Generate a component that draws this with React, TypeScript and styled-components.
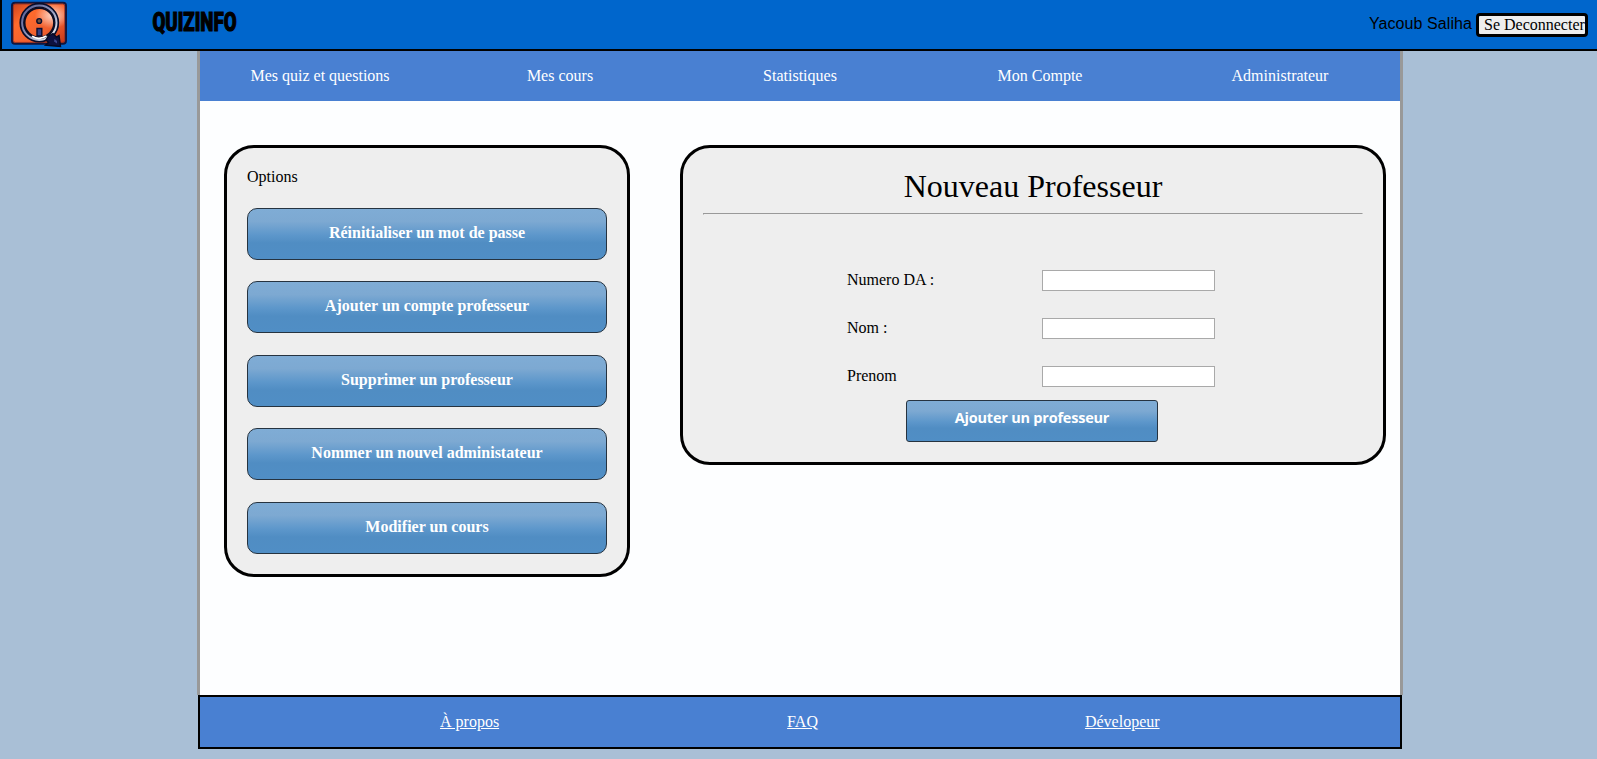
import React from 'react';
import styled, { createGlobalStyle } from 'styled-components';

const GlobalStyle = createGlobalStyle`
  * { box-sizing: border-box; }
  body {
    margin: 0;
    background: #a9bfd6;
    color: #000;
    font: 16px/18px 'Liberation Serif', 'Times New Roman', serif;
  }
`;

const Header = styled.header`
  display: flex;
  align-items: flex-start;
  height: 51px;
  padding-left: 8px;
  padding-right: 9px;
  background: #06c;
  border-left: 2px solid #000;
  border-bottom: 2px solid #000;
`;

const Logo = styled.svg`
  width: 60px;
  height: 49px;
`;

const Brand = styled.svg`
  width: 180px;
  height: 44px;
  margin-left: 80px;
  overflow: visible;
  font-family: Roboto, sans-serif;
  font-size: 26px;
  font-weight: 900;
`;

const Session = styled.div`
  display: flex;
  align-items: center;
  gap: 4px;
  margin: 13px 0 0 auto;
`;

const UserName = styled.span`
  font-family: 'Liberation Sans', Arial, sans-serif;
  font-size: 16px;
  letter-spacing: 0.08px;
  line-height: 20px;
  padding-bottom: 3px;
`;

const Logout = styled.button`
  width: 112px;
  height: 24px;
  padding: 0 0 0 5px;
  overflow: hidden;
  white-space: nowrap;
  text-align: left;
  font: inherit;
  color: #000;
  background: #eee;
  border: 3px solid #000;
  border-radius: 4px;
`;

const Page = styled.div`
  width: 1206px;
  height: 644px;
  margin-left: 197px;
  background: #fdfeff;
  border: solid #999;
  border-width: 0 3px;
`;

const Nav = styled.nav`
  display: grid;
  grid-template-columns: repeat(5, 1fr);
  align-items: center;
  height: 50px;
  background: #4980d2;
  color: #fff;
  text-align: center;
`;

const Content = styled.main`
  display: flex;
  align-items: flex-start;
  gap: 50px;
  padding: 44px 14px 0 24px;
`;

const Panel = styled.section<{ $width: number; $height: number }>`
  width: ${(p) => p.$width}px;
  height: ${(p) => p.$height}px;
  padding: 20px;
  background: #eee;
  border: 3px solid #000;
  border-radius: 30px;
`;

const OptionList = styled.div`
  display: flex;
  flex-direction: column;
  gap: 21.4px;
  margin-top: 22px;
`;

const BlueButton = styled.button`
  display: block;
  padding: 0;
  color: #fff;
  font-weight: bold;
  border: 1px solid #263340;
  background: linear-gradient(#7facd5 0%, #7da9d2 25%, #5d97cb 52%, #508dc3 68%, #508ec5 100%);
`;

const OptionButton = styled(BlueButton)`
  width: 360px;
  height: 52px;
  padding-bottom: 2px;
  font-family: inherit;
  font-size: 16px;
  border-radius: 10px;
`;

const SubmitButton = styled(BlueButton)`
  width: 252px;
  height: 42px;
  margin: 13px auto 0 203px;
  padding-bottom: 8px;
  font-family: 'Open Sans', 'Segoe UI', sans-serif;
  font-size: 14.5px;
  letter-spacing: -0.22px;
  border-radius: 3px;
`;

const Title = styled.h1`
  margin: 0;
  font-size: 32px;
  line-height: 36px;
  font-weight: normal;
  text-align: center;
`;

const Rule = styled.hr`
  margin: 9px 0 55px;
  border: 1px solid;
  border-color: #999 #eee #eee #999;
`;

const Fields = styled.div`
  display: grid;
  gap: 27px;
  padding-left: 144px;
`;

const Field = styled.label`
  display: grid;
  grid-template-columns: 195px 173px;
  align-items: start;
  height: 21px;
  line-height: 20px;
`;

const Input = styled.input`
  width: 173px;
  height: 21px;
  background: #fff;
  border: 1px solid #a9a9a9;
`;

const Footer = styled.footer`
  display: flex;
  align-items: center;
  width: 1204px;
  height: 54px;
  margin-left: 198px;
  padding-left: 240px;
  background: #4980d2;
  border: 2px solid #000;
`;

const FooterLink = styled.a<{ $gap?: number }>`
  margin-right: ${(p) => p.$gap ?? 0}px;
  color: #fff;
  text-decoration: underline;
`;

const menu = ['Mes quiz et questions', 'Mes cours', 'Statistiques', 'Mon Compte', 'Administrateur'];
const options = [
  'Réinitialiser un mot de passe',
  'Ajouter un compte professeur',
  'Supprimer un professeur',
  'Nommer un nouvel administateur',
  'Modifier un cours',
];
const fields = ['Numero DA :', 'Nom :', 'Prenom'];

function QuizLogo() {
  return (
    <Logo viewBox="10 0 60 49" aria-hidden="true">
      <defs>
        <linearGradient id="plate" x1="0" y1="0" x2="1" y2="1">
          <stop offset="0" stopColor="#c8401c" />
          <stop offset=".3" stopColor="#ff6a2c" />
          <stop offset=".65" stopColor="#f06030" />
          <stop offset="1" stopColor="#c03418" />
        </linearGradient>
        <radialGradient id="shine" cx=".76" cy=".3" r=".34">
          <stop offset="0" stopColor="#fff" stopOpacity=".75" />
          <stop offset="1" stopColor="#fff" stopOpacity="0" />
        </radialGradient>
        <linearGradient id="ring" x1="0" y1="0" x2="1" y2="1">
          <stop offset="0" stopColor="#555b91" />
          <stop offset=".4" stopColor="#8288b0" />
          <stop offset=".6" stopColor="#a4aac8" />
          <stop offset="1" stopColor="#fff" />
        </linearGradient>
      </defs>
      <rect x="12" y="2.7" width="54" height="41" rx="3" fill="url(#plate)" stroke="#11163e" strokeWidth="2" />
      <rect x="13.3" y="4" width="51.4" height="38.4" rx="2" fill="url(#shine)" stroke="#8a2d24" strokeWidth=".8" />
      <circle cx="39.3" cy="22.7" r="17.4" fill="none" stroke="#090c2a" strokeWidth="5" />
      <circle cx="39.3" cy="22.7" r="17.2" fill="none" stroke="url(#ring)" strokeWidth="2" />
      <circle cx="39.3" cy="22.7" r="14.6" fill="none" stroke="#0a0b20" strokeWidth="1.6" />
      <path d="M32 36.2 Q39 40.5 46.5 36" fill="none" stroke="#fff" strokeWidth="1.8" />
      <circle cx="39.2" cy="21" r="2.4" fill="#73513f" stroke="#080e2e" strokeWidth="1.4" />
      <path d="M37 28.5h4.8v7.5H37z" fill="#303c82" stroke="#080c30" strokeWidth="1.4" />
      <path d="M48.5 36 53 33.5 56.5 37 59 35.5 60.5 46.4 45.5 45.2 48.5 42.5 46 40z" fill="#0d1140" stroke="#050922" strokeWidth="1.4" />
      <path d="m54.5 39 2.5 2v2.5l-3-2z" fill="#3b4890" />
    </Logo>
  );
}

export default function App() {
  return (
    <>
      <GlobalStyle />
      <Header>
        <QuizLogo />
        <Brand>
          <text x="2.5" y="31" textLength="84" lengthAdjust="spacingAndGlyphs" stroke="#000" strokeWidth="1.1">
            QUIZINFO
          </text>
        </Brand>
        <Session>
          <UserName>Yacoub Saliha</UserName>
          <Logout>Se Deconnecter</Logout>
        </Session>
      </Header>
      <Page>
        <Nav>
          {menu.map((item) => (
            <span key={item}>{item}</span>
          ))}
        </Nav>
        <Content>
          <Panel $width={406} $height={432}>
            <div>Options</div>
            <OptionList>
              {options.map((option) => (
                <OptionButton key={option}>{option}</OptionButton>
              ))}
            </OptionList>
          </Panel>
          <Panel $width={706} $height={320}>
            <Title>Nouveau Professeur</Title>
            <Rule />
            <Fields>
              {fields.map((field) => (
                <Field key={field}>
                  {field}
                  <Input />
                </Field>
              ))}
            </Fields>
            <SubmitButton>Ajouter un professeur</SubmitButton>
          </Panel>
        </Content>
      </Page>
      <Footer>
        <FooterLink $gap={288}>À propos</FooterLink>
        <FooterLink $gap={267}>FAQ</FooterLink>
        <FooterLink>Dévelopeur</FooterLink>
      </Footer>
    </>
  );
}
